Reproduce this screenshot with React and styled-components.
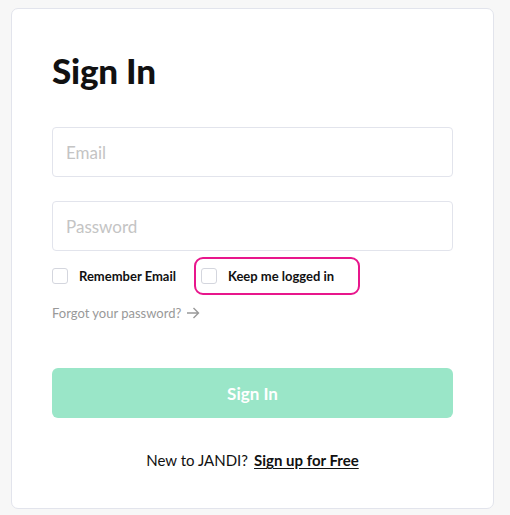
import React, { useState } from 'react';
import styled, { createGlobalStyle } from 'styled-components';

const GlobalStyle = createGlobalStyle`
  body {
    margin: 0;
    background: #f7f7f7;
    font-family: 'Lato', 'Noto Sans', sans-serif;
  }
`;

const Page = styled.div`
  padding: 8px 16px 8px 11px;
`;

const Card = styled.div`
  background: #fff;
  border: 1px solid #e2e4ec;
  border-radius: 7px;
  padding: 36px 40px 39px 40px;
`;

const Title = styled.h1`
  margin: 0 0 32px 0;
  font-size: 35px;
  line-height: 50px;
  font-weight: 900;
  color: #111;
  letter-spacing: -0.2px;
`;

const Form = styled.form`
  display: flex;
  flex-direction: column;
`;

const Input = styled.input`
  box-sizing: border-box;
  height: 50px;
  width: 100%;
  padding: 0 13px;
  border: 1px solid #e2e4ec;
  border-radius: 4px;
  font-family: inherit;
  font-size: 17px;
  color: #222;
  margin-bottom: ${p => p.$gap || 0}px;

  &::placeholder {
    color: #c4c4c4;
  }

  &:focus {
    outline: none;
    border-color: #9ae6c8;
  }
`;

const OptionRow = styled.div`
  display: flex;
  align-items: center;
  gap: 25px;
  margin-top: 17px;
`;

const Option = styled.label`
  display: flex;
  align-items: center;
  gap: 11px;
  font-size: 13px;
  font-weight: 700;
  color: #111;
  cursor: pointer;
  ${p => p.$highlight && `
    margin: -11px -26px -11px -7px;
    padding: 9px 24px 9px 5px;
    border: 2px solid #e8168c;
    border-radius: 9px;
  `}
`;

const Box = styled.span`
  box-sizing: border-box;
  width: 16px;
  height: 16px;
  border: 1px solid #d4d6de;
  border-radius: 3px;
  background: ${p => (p.$checked ? '#00c473' : '#fff')};
`;

const Forgot = styled.a`
  display: flex;
  align-items: center;
  gap: 5px;
  margin-top: 21px;
  font-size: 13px;
  color: #999;
  text-decoration: none;
  cursor: pointer;
`;

const SubmitButton = styled.button`
  height: 50px;
  margin-top: 47px;
  border: none;
  border-radius: 6px;
  background: #9ae6c8;
  color: #fff;
  font-family: inherit;
  font-size: 17px;
  font-weight: 700;
  cursor: pointer;
`;

const Footer = styled.div`
  margin-top: 33px;
  text-align: center;
  font-size: 15px;
  color: #111;

  a {
    margin-left: 6px;
    font-weight: 700;
    color: #111;
    text-decoration: underline;
    text-underline-offset: 2px;
  }
`;

function Check({ checked, onToggle }) {
  return <Box $checked={checked} onClick={onToggle} />;
}

export default function App() {
  const [remember, setRemember] = useState(false);
  const [keep, setKeep] = useState(false);

  return (
    <Page>
      <GlobalStyle />
      <Card>
        <Title>Sign In</Title>
        <Form onSubmit={e => e.preventDefault()}>
          <Input type="email" placeholder="Email" $gap={24} />
          <Input type="password" placeholder="Password" />
          <OptionRow>
            <Option>
              <Check checked={remember} onToggle={() => setRemember(!remember)} />
              Remember Email
            </Option>
            <Option $highlight>
              <Check checked={keep} onToggle={() => setKeep(!keep)} />
              Keep me logged in
            </Option>
          </OptionRow>
          <Forgot>
            Forgot your password?
            <svg width="14" height="12" viewBox="0 0 14 12" fill="none" stroke="#999" strokeWidth="1.4">
              <path d="M1 6h11.5M7.5 1l5 5-5 5" />
            </svg>
          </Forgot>
          <SubmitButton type="submit">Sign In</SubmitButton>
        </Form>
        <Footer>
          New to JANDI?<a>Sign up for Free</a>
        </Footer>
      </Card>
    </Page>
  );
}
